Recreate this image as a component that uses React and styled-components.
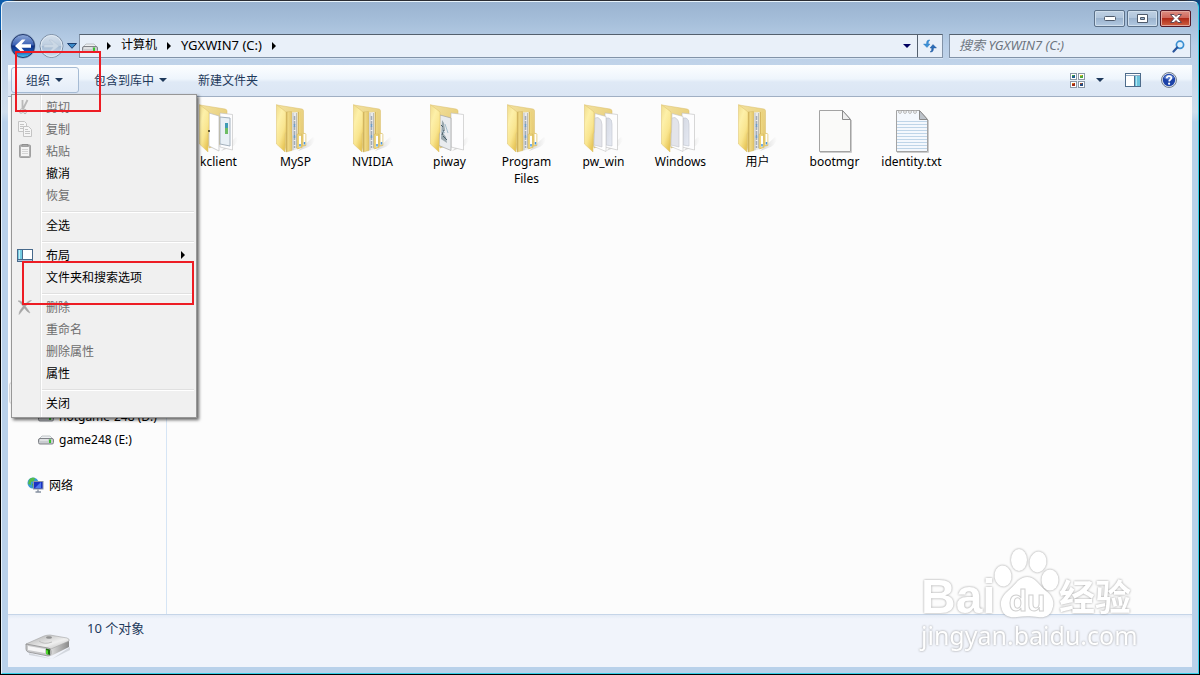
import { useState } from 'react'
import styled, { createGlobalStyle } from 'styled-components'

const GlobalStyle = createGlobalStyle`
* { box-sizing: border-box; }
body {
  margin: 0;
  background: #000;
  font-family: "Noto Sans", "Noto Sans CJK SC", sans-serif;
  font-size: 12px;
}
button, input {
  font: inherit;
  color: inherit;
  margin: 0;
}
button {
  background: none;
  border: 0;
  padding: 0;
}
svg {
  display: block;
  flex: none;
}
`;

const Desktop = styled.div`
  min-height: 100vh;
  padding: 1px 1px 1px;
  display: flex;
  background: linear-gradient(to right, #0b5cab 8px, #2a2c33 16px, #2a2c33 calc(100% - 16px), #0b4a8b) top / 100% 30px no-repeat #000;
`;
const Window = styled.div`
  position: relative;
  flex: 1;
  display: flex;
  flex-direction: column;
  padding: 0 6px 6px;
  border: 1px solid #e8f3fb;
  border-right-color: #35cfe8;
  border-bottom-color: #35cfe8;
  border-radius: 6px 6px 0 0;
  background: linear-gradient(to bottom, #9ab3d0 0px, #a6bfda 20px, #b9cfe8 44px, #c5d6ea 76px, #d0deec 110px, #b9d1ea 120px);
`;
const TitleBar = styled.header`
  display: flex;
  justify-content: flex-end;
  gap: 2px;
  height: 32px;
  padding: 8px 1px 0;
`;
const WindowButton = styled.button`
  display: flex;
  align-items: center;
  justify-content: center;
  width: 31px;
  height: 17px;
  border: 1px solid ${props => props.$close ? '#551827' : '#5c7189'};
  border-radius: 2px;
  box-shadow: inset 0 0 0 1px ${props => props.$close ? '#e2a79e' : '#cfdeec'};
  background: ${props => props.$close
    ? 'linear-gradient(#dd8f84 0%, #d0665a 45%, #b02a19 50%, #cf6242 100%)'
    : 'linear-gradient(#bfd0e3 0%, #b0c5dc 45%, #9bb3ce 50%, #b3cae2 100%)'};
`;

const NavBar = styled.nav`
  display: flex;
  align-items: center;
  height: 31px;
  padding: 0 1px 7px 2px;
`;
const HistoryButtons = styled.div`
  display: flex;
  align-items: center;
  gap: 3px;
  margin-right: 2px;
  border-radius: 13px;
`;
const AddressBar = styled.div`
  flex: 1;
  display: flex;
  align-items: center;
  height: 24px;
  margin-right: 6px;
  border: 1px solid #8293a8;
  border-top-color: #54606e;
  background: #e9f0f9;
  box-shadow: 0 1px 0 #d5e3f3;
`;
const Crumb = styled.button`
  font-size: ${props => props.$latin ? '13px' : '12px'};
  height: 22px;
  line-height: 20px;
  padding-bottom: 2px;
  color: #000;
  margin: 0 10px;
`;
const DriveIcon = styled.span`
  padding: 4px 9px 0 2px;
`;
const AddressDrop = styled.button`
  display: flex;
  align-items: center;
  justify-content: center;
  width: 20px;
  height: 22px;
  margin-left: auto;
`;
const RefreshButton = styled.button`
  display: flex;
  align-items: center;
  justify-content: center;
  width: 25px;
  height: 22px;
  border-left: 1px solid #54606e;
`;
const SearchBox = styled.label`
  display: flex;
  align-items: center;
  width: 242px;
  height: 24px;
  padding: 0 5px 0 9px;
  border: 1px solid #8293a8;
  border-top-color: #54606e;
  background: #e9f0f9;
  box-shadow: 0 1px 0 #d5e3f3;
`;
const SearchInput = styled.input`
  flex: 1;
  min-width: 0;
  height: 22px;
  border: 0;
  outline: 0;
  padding: 0 0 2px;
  background: transparent;
  font-size: 13px;
  font-style: italic;
  &::placeholder {
    color: #6d7580;
    opacity: 1;
  }
`;

const Toolbar = styled.div`
  position: relative;
  display: flex;
  align-items: center;
  height: 32px;
  padding: 0 11px 1px 3px;
  color: #1e395b;
  border-bottom: 1px solid #a0afc3;
  background: linear-gradient(#fcfeff 0%, #eef5fc 45%, #dfe9f6 55%, #dbe6f4 100%);
`;
const ToolButton = styled.button`
  display: flex;
  align-items: center;
  gap: 5px;
  height: 26px;
  padding: 0 15px 0 14px;
  border: 1px solid ${props => props.$open ? '#a6bbd4' : 'transparent'};
  border-radius: 3px;
  background: ${props => props.$open ? 'linear-gradient(#f5f9fd, #e4edf8)' : 'none'};
`;
const ViewTools = styled.div`
  display: flex;
  align-items: center;
  margin-left: auto;
`;
const ViewButton = styled.button`
  padding: 4px;
  margin-left: ${props => props.$gap || 0}px;
`;

const Menu = styled.div`
  position: absolute;
  z-index: 2;
  top: 29px;
  left: 3px;
  width: 186px;
  padding: 1px 2px 3px;
  border: 1px solid #979797;
  background: linear-gradient(to right, transparent 28px, #e2e3e3 28px, #e2e3e3 29px, #fff 29px, #fff 30px, transparent 30px) #f0f0f0;
  box-shadow: 2px 2px 3px rgba(0, 0, 0, 0.6);
`;
const MenuItem = styled.button`
  display: flex;
  align-items: center;
  width: 100%;
  height: 22px;
  text-align: left;
  color: ${props => props.disabled ? '#6d6d6d' : '#000'};
`;
const MenuIcon = styled.span`
  width: 32px;
  padding-left: 3px;
`;
const MenuLabel = styled.span`
  flex: 1;
`;
const MenuArrow = styled.span`
  padding-right: 9px;
`;
const MenuLine = styled.div`
  height: 2px;
  margin: 5px 0 1px 28px;
  border-top: 1px solid #e0e0e0;
  border-bottom: 1px solid #fff;
`;

const Main = styled.div`
  flex: 1;
  display: flex;
  background: #fcfcfc;
`;
const Sidebar = styled.aside`
  width: 159px;
  padding: 285px 0 0 1px;
  border-right: 1px solid #d6e5f5;
`;
const SelectedRow = styled.div`
  height: 22px;
  margin-bottom: 1px;
  border: 1px solid #d9d9d9;
  border-radius: 3px;
  background: #f5f5f5;
`;
const TreeItem = styled.a`
  display: flex;
  align-items: center;
  gap: 5px;
  height: 23px;
  padding-left: ${props => props.$root ? '18px' : '29px'};
  margin-top: ${props => props.$root ? '22px' : '0'};
  color: #000;
  text-decoration: none;
  white-space: nowrap;
`;
const FileGrid = styled.main`
  flex: 1;
  display: flex;
  flex-wrap: wrap;
  align-content: flex-start;
  padding: 7px 0 0 13px;
`;
const FileItem = styled.button`
  display: flex;
  flex-direction: column;
  align-items: center;
  justify-content: flex-start;
  width: 77px;
  padding: 0 8px;
  line-height: 17px;
  color: #000;
`;
const FileName = styled.span`
  max-width: 62px;
`;

const StatusBar = styled.footer`
  display: flex;
  gap: 16px;
  height: 53px;
  padding: 3px 17px;
  font-size: 13px;
  line-height: 20px;
  color: #1e395b;
  border-top: 1px solid #c6d5e8;
  background: linear-gradient(#e4ebf6, #f1f4fb 4px);
`;
const StatusIcon = styled.span`
  padding-top: 16px;
`;

const Marker = styled.div`
  position: absolute;
  z-index: 3;
  left: ${props => props.$x}px;
  top: ${props => props.$y}px;
  width: ${props => props.$w}px;
  height: ${props => props.$h}px;
  border: 2px solid #ed1c24;
  pointer-events: none;
`;

const Watermark = styled.div`
  position: absolute;
  right: 61px;
  bottom: 24px;
  width: 216px;
  color: #fff;
  filter: drop-shadow(0 0 1px #999);
  pointer-events: none;
`;
const WatermarkTop = styled.div`
  display: flex;
  align-items: flex-end;
  height: 74px;
  font-family: "Liberation Sans", "Noto Sans CJK SC", sans-serif;
  font-weight: bold;
`;
const Brand = styled.span`
  width: 72px;
  font-size: 48px;
  line-height: 48px;
`;
const Paw = styled.svg`
  width: 66px;
  height: 74px;
`;
const BrandCjk = styled.span`
  font-size: 36px;
  line-height: 44px;
`;
const WatermarkUrl = styled.div`
  font-size: 25px;
  line-height: 28px;
`;

const DownArrow = ({ color = '#1e395b' }) => (
  <svg width="8" height="4" viewBox="0 0 8 4"><path d="M0 0h8L4 4z" fill={color} /></svg>
)

const RightArrow = () => (
  <svg width="4" height="8" viewBox="0 0 4 8"><path d="M0 0v8l4-4z" fill="#000" /></svg>
)

const BackIcon = () => (
  <svg width="26" height="26" viewBox="0 0 26 26">
    <defs>
      <linearGradient id="back" x1="0" y1="0" x2="0" y2="1">
        <stop offset="0" stopColor="#8fa9d8" />
        <stop offset=".45" stopColor="#3c62b4" />
        <stop offset=".5" stopColor="#0c2f86" />
        <stop offset=".75" stopColor="#1a58b4" />
        <stop offset="1" stopColor="#4cd3f5" />
      </linearGradient>
    </defs>
    <circle cx="13" cy="13" r="12.500" fill="#8ba3c2" />
    <circle cx="13" cy="13" r="11.500" fill="url(#back)" stroke="#21396e" />
    <path d="M5 13l7-6.500h3.500L11.500 11.300H21v3.400h-9.500l4 4.800H12z" fill="#fff" />
  </svg>
)

const ForwardIcon = () => (
  <svg width="25" height="26" viewBox="0 0 25 26">
    <defs>
      <linearGradient id="fwd" x1="0" y1="0" x2="0" y2="1">
        <stop offset="0" stopColor="#d5e0ec" />
        <stop offset=".48" stopColor="#bccddf" />
        <stop offset=".52" stopColor="#a5bbd3" />
        <stop offset="1" stopColor="#cfe0f0" />
      </linearGradient>
    </defs>
    <circle cx="12.500" cy="13" r="11.500" fill="url(#fwd)" stroke="#7b8da3" />
    <circle cx="12.500" cy="13" r="10.500" fill="none" stroke="#e2ebf4" />
    <path d="M20 13l-7-6h-3l4 4.500H5v3h9L10 19h3z" fill="#cbd8e5" stroke="#b2c3d5" strokeWidth=".5" />
  </svg>
)

const SmallDrive = () => (
  <svg width="16" height="10" viewBox="0 0 16 10">
    <path d="M1 4l3-3h8l3 3z" fill="#eef0f2" stroke="#b3b7bb" strokeWidth=".8" />
    <rect x=".5" y="3.500" width="15" height="5.500" rx="1.500" fill="#c9ccd0" stroke="#808388" />
    <path d="M2 5h8" stroke="#f5f5f6" />
    <rect x="11" y="4.500" width="2" height="3.500" fill="#35c42c" />
  </svg>
)

const RefreshIcon = () => (
  <svg width="14" height="14" viewBox="0 0 14 14">
    <path d="M6 1C3.800 1 3.500 3 3.500 5H.5L4 8.500 7 5H5.300C5.300 3 5.500 2 7 1z" fill="#3c8fd6" stroke="#2773ba" strokeWidth=".4" />
    <path d="M8 13c2.200 0 2.500-2 2.500-4H13.500L10 5.500 7 9H8.700c0 2-.2 3-1.700 4z" fill="#2b6db8" stroke="#1d4f92" strokeWidth=".4" />
  </svg>
)

const SearchIcon = () => (
  <svg width="13" height="13" viewBox="0 0 13 13">
    <circle cx="8" cy="4.800" r="3.600" fill="#dff0fc" stroke="#3a8ed1" strokeWidth="1.700" />
    <path d="M5.200 7.600L1.500 11.500" stroke="#29549b" strokeWidth="2.200" strokeLinecap="round" />
  </svg>
)

const ThumbsIcon = () => (
  <svg width="15" height="15" viewBox="0 0 15 15">
    {[['#1d5e8a', '#4fa83d', 0, 0], ['#4fa83d', '#e2b534', 8, 0], ['#a32a17', '#d97a1c', 0, 8], ['#26497f', '#a8562f', 8, 8]].map(([a, b, x, y]) => (
      <g key={a} transform={`translate(${x} ${y})`}>
        <rect x=".5" y=".5" width="6" height="6" fill="#fff" stroke="#8b98a6" />
        <rect x="2" y="2" width="3" height="3" fill={a} />
        <rect x="2" y="2" width="2" height="1" fill={b} />
      </g>
    ))}
  </svg>
)

const PaneIcon = () => (
  <svg width="16" height="14" viewBox="0 0 16 14">
    <rect x=".5" y=".5" width="15" height="13" fill="#fff" stroke="#4e6c8b" />
    <path d="M1 2.500h14" stroke="#8fa9c2" />
    <path d="M9.500 3v10" stroke="#4e6c8b" />
    <rect x="10" y="3" width="5" height="10" fill="#6cc3dc" />
    <path d="M11.500 3v10" stroke="#b4e5f1" />
  </svg>
)

const HelpIcon = () => (
  <svg width="16" height="16" viewBox="0 0 16 16">
    <circle cx="8" cy="8" r="7.500" fill="#dfe5ee" stroke="#75808f" />
    <circle cx="8" cy="8" r="6.200" fill="#1c42a8" />
    <path d="M3 6a5.500 5.500 0 0 1 10 0q-5 3-10 0z" fill="#5f82cf" />
    <path d="M5.800 6.300C5.800 3.300 10.400 3.400 10.300 6c0 1.700-2.100 1.700-2.200 3.400" fill="none" stroke="#fff" strokeWidth="1.700" />
    <circle cx="8.100" cy="11.700" r="1.100" fill="#fff" />
  </svg>
)

const icons = {
  cut: (
    <svg width="16" height="16" viewBox="0 0 16 16" fill="none" stroke="#b9b9b9">
      <path d="M5.500 1v9M10.500 1L6 10" strokeWidth="1.800" />
      <ellipse cx="4.500" cy="12" rx="1.500" ry="2.300" transform="rotate(25 4.500 12)" />
      <ellipse cx="8" cy="12.500" rx="1.400" ry="2.300" />
    </svg>
  ),
  copy: (
    <svg width="16" height="16" viewBox="0 0 16 16" fill="#f6f6f6" stroke="#c4c4c4">
      <path d="M1.500.5h6l2 2v8h-8z" />
      <path d="M3 3.500h4M3 5.500h5M3 7.500h5" />
      <path d="M6.500 5.500h5l3 3v7h-8z" />
      <path d="M8 8.500h3M8 10.500h5M8 12.500h5" />
    </svg>
  ),
  paste: (
    <svg width="16" height="16" viewBox="0 0 16 16">
      <rect x="2.500" y="2" width="11" height="12.500" rx="1" fill="#b0b0b0" stroke="#a0a0a0" />
      <rect x="4" y="4" width="8" height="9" fill="#f4f4f4" />
      <path d="M5 6.500h6M5 8.500h6M5 10.500h6" stroke="#d4d4d4" />
      <path d="M5 3V1.500h6V3z" fill="#c8c8c8" stroke="#8f8f8f" />
    </svg>
  ),
  layout: (
    <svg width="16" height="13" viewBox="0 0 16 13">
      <rect x=".5" y=".5" width="15" height="12" fill="#fff" stroke="#47698b" />
      <rect x="1" y="1" width="4" height="9" fill="#74cbe0" />
      <path d="M2.500 1v9" stroke="#c7eef6" />
      <path d="M5.500 1v9M1 10.500h14" stroke="#47698b" />
      <rect x="1" y="11" width="14" height="1" fill="#a9c5dc" />
    </svg>
  ),
  remove: (
    <svg width="16" height="16" viewBox="0 0 16 16">
      <path d="M1 2c3-1 5 2 6.500 4C9.500 4 12 1 14.500 1.500 12 3 10 5 8.500 7.500c2 2.500 3.500 4.500 4.500 6.500-3-1-4-3-5.500-5C5.500 11 4.500 13 2 15.500 2 12.500 4 10 6 7.500 4.500 5 3 3 1 2z" fill="#a6a6a6" stroke="#a6a6a6" strokeWidth=".5" />
    </svg>
  ),
}

const NetworkIcon = () => (
  <svg width="17" height="16" viewBox="0 0 17 16">
    <circle cx="6" cy="6" r="5.500" fill="#3899d8" />
    <path d="M2 3c2-3 5-2 6-2L7 4 4 5 4 8 1 7z" fill="#54bd48" />
    <path d="M5 7l4-2v6L6 11z" fill="#38a547" />
    <rect x="6.500" y="4.500" width="9.500" height="7.500" fill="#1a32c4" stroke="#8a94a5" />
    <path d="M8 11l6-6v6z" fill="#4d77ec" />
    <path d="M11 12.500v2M8.500 15h5.500" stroke="#8590a0" strokeWidth="1.300" />
  </svg>
)

const FolderDefs = () => (
  <svg width="0" height="0" style={{ position: 'absolute' }} aria-hidden="true">
    <defs>
      <linearGradient id="cover" x1="0" y1="0" x2=".6" y2="1">
        <stop offset="0" stopColor="#f0dc8c" />
        <stop offset=".35" stopColor="#fdf0a9" />
        <stop offset=".7" stopColor="#f9e58f" />
        <stop offset="1" stopColor="#e8c75a" />
      </linearGradient>
      <linearGradient id="backing" x1="0" y1="0" x2="1" y2="1">
        <stop offset="0" stopColor="#f3e2a0" />
        <stop offset="1" stopColor="#e2c468" />
      </linearGradient>
      <linearGradient id="shade" x1="0" y1="0" x2="1" y2="0">
        <stop offset="0" stopColor="#999" stopOpacity=".4" />
        <stop offset="1" stopColor="#999" stopOpacity="0" />
      </linearGradient>
      <linearGradient id="sheet" x1="0" y1="0" x2="1" y2="1">
        <stop offset="0" stopColor="#d5d9e3" />
        <stop offset="1" stopColor="#e6eaf3" />
      </linearGradient>
      <linearGradient id="tab" x1="0" y1="0" x2="1" y2="0">
        <stop offset="0" stopColor="#c9a850" />
        <stop offset=".35" stopColor="#efd985" />
        <stop offset="1" stopColor="#e3c467" />
      </linearGradient>
    </defs>
  </svg>
)

const Folder = ({ kind }) => (
  <svg width="48" height="49" viewBox="0 0 48 49">
    <path d="M26 47l15-14 2 2q-2 7-9 9z" fill="url(#shade)" />
    {kind === 'nested' ? (
      <>
        <path d="M5 1l25 4q1.500.3 1.500 2v22l2.500 1v11.500L14 46z" fill="url(#backing)" stroke="#d9bd68" strokeWidth=".5" />
        <path d="M26 8l3-.5v22l1.500 1v13L26 45z" fill="url(#tab)" />
        <path d="M20 8.500l5.500-.5v37L20 47z" fill="#e9eaea" />
        <path d="M21 9v37" stroke="#c3c4c4" />
        <path d="M22.500 12v32" stroke="#a3abb5" strokeWidth="1.500" strokeDasharray="4 1" />
        <path d="M22.500 20v3M22.500 31v3" stroke="#6d9dc6" strokeWidth="1.500" />
        <path d="M24.500 9v35" stroke="#bdbdb8" />
        <path d="M14 8l5.500-.5V30l.5 3v13.500L14 48z" fill="url(#tab)" stroke="#cdb05c" strokeWidth=".4" />
        <path d="M25 30h4.500v13.500L25 45z" fill="#edd47c" stroke="#cdb05c" strokeWidth=".4" />
        <path d="M27 32h2v10.500l-2 .7zM31.500 30h2v10.500l-2 .7z" fill="#fff" />
        <path d="M28 40v2.500M32.500 38v2.500" stroke="#4695e0" strokeWidth="1.500" />
      </>
    ) : (
      <>
        <path d="M5 1l25 4q2 .5 2 2v31L14 44z" fill="url(#backing)" stroke="#d9bd68" strokeWidth=".5" />
        <path d="M25 9l12.500 1.500V46L25 43z" fill="#fdfdfe" stroke="#bdbdbd" strokeWidth=".6" />
        {kind === 'pages' && (
          <>
            <path d="M26 14h3q3 1 3 6v22l-6-1z" fill="url(#sheet)" stroke="#c0c5cf" strokeWidth=".6" />
            <path d="M15 9.500l11 3V47.500l-12-5z" fill="#fff" stroke="#c2c2c2" strokeWidth=".6" />
            <path d="M15 14l3-.5q4 2 4 7V43l-8-2z" fill="#e3e4ea" stroke="#c2c4ca" strokeWidth=".6" />
          </>
        )}
        {kind === 'window' && (
          <>
            <path d="M25 13l10 1v28l-10-2z" fill="#e9f0f6" stroke="#a4b1bd" />
            <path d="M30 19h3v11h-3z" fill="#3f9bb4" />
            <path d="M30 24h3v6h-3z" fill="#6dbd65" />
            <path d="M14 9l10 3v35l-10-5z" fill="#fff" stroke="#bbb" strokeWidth=".7" />
          </>
        )}
        {kind === 'picture' && (
          <>
            <path d="M14 11l11 3v32.500l-12-5z" fill="#e9ecef" stroke="#a5a5a5" strokeWidth=".7" />
            <path d="M16 16l2 3 1 7-2 3 3 4 1 6-6-4z" fill="#9aa8ae" />
            <path d="M15 21l2 2M18 26l-2 5M17 32l4 4" stroke="#4a5f6a" />
            <path d="M19 20l3 9M16 27l3 2" stroke="#a5bfcc" />
          </>
        )}
      </>
    )}
    <path d="M4.500.5L14 8v20l-1 2v18L4.500 40z" fill="url(#cover)" stroke="#dcc06a" strokeWidth=".5" />
    {kind === 'window' && <path d="M13 27h2" stroke="#3d3519" strokeWidth="1.500" />}
  </svg>
)

const Page = ({ lined }) => (
  <svg width="48" height="49" viewBox="0 0 48 49">
    <path d="M9 48.500h31.500V16" fill="none" stroke="#ccc" />
    <path d="M8.500 6.500h23l8 9v32h-31z" fill={lined ? '#f4f8fd' : '#fafaf9'} stroke="#a3a3a3" />
    {lined && (
      <>
        <path d="M9 17.500h30M9 20.500h30M9 23.500h30M9 26.500h30M9 29.500h30M9 32.500h30M9 35.500h30M9 38.500h30M9 41.500h30M9 44.500h30" stroke="#bfd5e8" />
        {[12, 17, 22, 27].map(x => <circle key={x} cx={x} cy="8" r="1.400" fill="#fff" stroke="#999" strokeWidth=".7" />)}
      </>
    )}
    <path d="M31.500 6.500v9h8z" fill={lined ? '#bdc3ca' : '#eee'} stroke="#8b8b8b" />
  </svg>
)

const BigDrive = () => (
  <svg width="46" height="25" viewBox="0 0 46 25">
    <defs>
      <linearGradient id="driveTop" x1="0" y1="0" x2="1" y2="1">
        <stop offset="0" stopColor="#a9a9a9" />
        <stop offset=".6" stopColor="#efefef" />
        <stop offset="1" stopColor="#b5b5b5" />
      </linearGradient>
      <linearGradient id="driveSide" x1="0" y1="0" x2="1" y2="0">
        <stop offset="0" stopColor="#dcdcdc" />
        <stop offset="1" stopColor="#8a8a8a" />
      </linearGradient>
    </defs>
    <path d="M4 19l23 6 18-12v3L27 25 4 21z" fill="#d3d7de" />
    <path d="M26 14L44 5v8L26 22z" fill="url(#driveSide)" />
    <path d="M1 10L19 2q3-1 6-1l17 3q3 1 2 3L26 15H3z" fill="url(#driveTop)" stroke="#a2a2a2" strokeWidth=".6" />
    <path d="M1 10l22 4q3 0 3 3v3q0 2-3 2L3 18q-2-1-2-3z" fill="#c9c9cb" stroke="#858585" strokeWidth=".7" />
    <path d="M3 12l17 3v4L3 16z" fill="#f6f6f7" />
    <path d="M21 14.500l4 1v5.500l-4-1z" fill="#1d6e0d" />
    <path d="M21 16l2 .5v4l-2-.5z" fill="#4fd82c" />
    <ellipse cx="24" cy="3.500" rx="3" ry="1.200" fill="#909090" />
    <path d="M14 7q5 4 13 1" fill="none" stroke="#bdbdbd" />
  </svg>
)

const menuGroups = [
  [
    { text: '剪切', icon: 'cut', disabled: true },
    { text: '复制', icon: 'copy', disabled: true },
    { text: '粘贴', icon: 'paste', disabled: true },
    { text: '撤消' },
    { text: '恢复', disabled: true },
  ],
  [{ text: '全选' }],
  [
    { text: '布局', icon: 'layout', sub: true },
    { text: '文件夹和搜索选项' },
  ],
  [
    { text: '删除', icon: 'remove', disabled: true },
    { text: '重命名', disabled: true },
    { text: '删除属性', disabled: true },
    { text: '属性' },
  ],
  [{ text: '关闭' }],
]

const files = [
  { name: 'kclient', kind: 'window' },
  { name: 'MySP', kind: 'nested' },
  { name: 'NVIDIA', kind: 'nested' },
  { name: 'piway', kind: 'picture' },
  { name: 'Program Files', kind: 'nested' },
  { name: 'pw_win', kind: 'pages' },
  { name: 'Windows', kind: 'pages' },
  { name: '用户', kind: 'nested' },
  { name: 'bootmgr', kind: 'file' },
  { name: 'identity.txt', kind: 'text' },
]

const FileIcon = ({ kind }) => {
  if (kind === 'file') return <Page />
  if (kind === 'text') return <Page lined />
  return <Folder kind={kind} />
}

const OrganizeMenu = () => (
  <Menu role="menu">
    {menuGroups.map((group, i) => (
      <div key={i}>
        {i > 0 && <MenuLine />}
        {group.map(item => (
          <MenuItem key={item.text} role="menuitem" disabled={item.disabled}>
            <MenuIcon>{icons[item.icon]}</MenuIcon>
            <MenuLabel>{item.text}</MenuLabel>
            {item.sub && <MenuArrow><RightArrow /></MenuArrow>}
          </MenuItem>
        ))}
      </div>
    ))}
  </Menu>
)

const App = () => {
  const [menuOpen, setMenuOpen] = useState(true)
  const [query, setQuery] = useState('')

  return (
    <Desktop>
      <GlobalStyle />
      <FolderDefs />
      <Window>
        <TitleBar>
          <WindowButton aria-label="最小化">
            <svg width="12" height="5" viewBox="0 0 12 5"><rect x=".5" y=".5" width="11" height="4" rx="1" fill="#fff" stroke="#4e5a6b" /></svg>
          </WindowButton>
          <WindowButton aria-label="最大化">
            <svg width="11" height="9" viewBox="0 0 11 9"><path fillRule="evenodd" d="M.5.5h10v8H.5zM3.500 3.500h4v2h-4z" fill="#fff" stroke="#4e5a6b" /></svg>
          </WindowButton>
          <WindowButton $close aria-label="关闭窗口">
            <svg width="12" height="9" viewBox="0 0 12 9"><path d="M.5.5H4L6 2.500 8 .5h3.500L8 4.500l3.500 4H8L6 6.500 4 8.500H.5L4 4.500z" fill="#fff" stroke="#54414f" strokeWidth=".9" /></svg>
          </WindowButton>
        </TitleBar>

        <NavBar>
          <HistoryButtons>
            <button aria-label="后退"><BackIcon /></button>
            <button aria-label="前进"><ForwardIcon /></button>
            <button aria-label="历史记录">
              <svg width="10" height="6" viewBox="0 0 10 6"><path d="M.5.5h9L5 5.300z" fill="#3b8ac9" stroke="#1c3f70" /></svg>
            </button>
          </HistoryButtons>
          <AddressBar>
            <DriveIcon><SmallDrive /></DriveIcon>
            <RightArrow />
            <Crumb>计算机</Crumb>
            <RightArrow />
            <Crumb $latin>YGXWIN7 (C:)</Crumb>
            <RightArrow />
            <AddressDrop aria-label="以前的位置"><DownArrow color="#000060" /></AddressDrop>
            <RefreshButton aria-label="刷新"><RefreshIcon /></RefreshButton>
          </AddressBar>
          <SearchBox>
            <SearchInput
              aria-label="搜索"
              placeholder="搜索 YGXWIN7 (C:)"
              value={query}
              onChange={e => setQuery(e.target.value)}
            />
            <SearchIcon />
          </SearchBox>
        </NavBar>

        <Toolbar>
          <ToolButton $open={menuOpen} onClick={() => setMenuOpen(!menuOpen)}>组织 <DownArrow /></ToolButton>
          <ToolButton>包含到库中 <DownArrow /></ToolButton>
          <ToolButton>新建文件夹</ToolButton>
          <ViewTools>
            <ViewButton aria-label="更改视图"><ThumbsIcon /></ViewButton>
            <ViewButton aria-label="更多选项" $gap={3}><DownArrow /></ViewButton>
            <ViewButton aria-label="预览窗格" $gap={13}><PaneIcon /></ViewButton>
            <ViewButton aria-label="帮助" $gap={12}><HelpIcon /></ViewButton>
          </ViewTools>
          {menuOpen && <OrganizeMenu />}
        </Toolbar>

        <Main>
          <Sidebar>
            <SelectedRow />
            <TreeItem href="#d"><SmallDrive />hotgame-248 (D:)</TreeItem>
            <TreeItem href="#e"><SmallDrive />game248 (E:)</TreeItem>
            <TreeItem href="#network" $root><NetworkIcon />网络</TreeItem>
          </Sidebar>
          <FileGrid>
            {files.map(file => (
              <FileItem key={file.name}>
                <FileIcon kind={file.kind} />
                <FileName>{file.name}</FileName>
              </FileItem>
            ))}
          </FileGrid>
        </Main>

        <StatusBar>
          <StatusIcon><BigDrive /></StatusIcon>
          <span>10 个对象</span>
        </StatusBar>

        <Marker $x={13} $y={49} $w={86} $h={61} />
        <Marker $x={20} $y={259} $w={172} $h={44} />

        <Watermark>
          <WatermarkTop>
            <Brand>Bai</Brand>
            <Paw viewBox="0 0 66 74">
              <g fill="#fff">
                <ellipse cx="10" cy="29" rx="8.500" ry="10.500" transform="rotate(-8 10 29)" />
                <ellipse cx="26" cy="13" rx="8" ry="11" />
                <ellipse cx="45" cy="15" rx="8.500" ry="10.500" transform="rotate(10 45 15)" />
                <ellipse cx="57" cy="33" rx="8.500" ry="10.500" />
                <path d="M34 30c8 0 12 8 19 14 7 5 9 12 6 19-2 6-8 8-14 7-8-1-14-1-21 0-7 1-13-1-15-7-3-8 0-14 7-20 6-5 10-13 18-13z" />
              </g>
              <text x="34" y="64" textAnchor="middle" fontSize="30" fill="#fff" stroke="#d0d0d0">du</text>
            </Paw>
            <BrandCjk>经验</BrandCjk>
          </WatermarkTop>
          <WatermarkUrl>jingyan.baidu.com</WatermarkUrl>
        </Watermark>
      </Window>
    </Desktop>
  )
}

export default App
